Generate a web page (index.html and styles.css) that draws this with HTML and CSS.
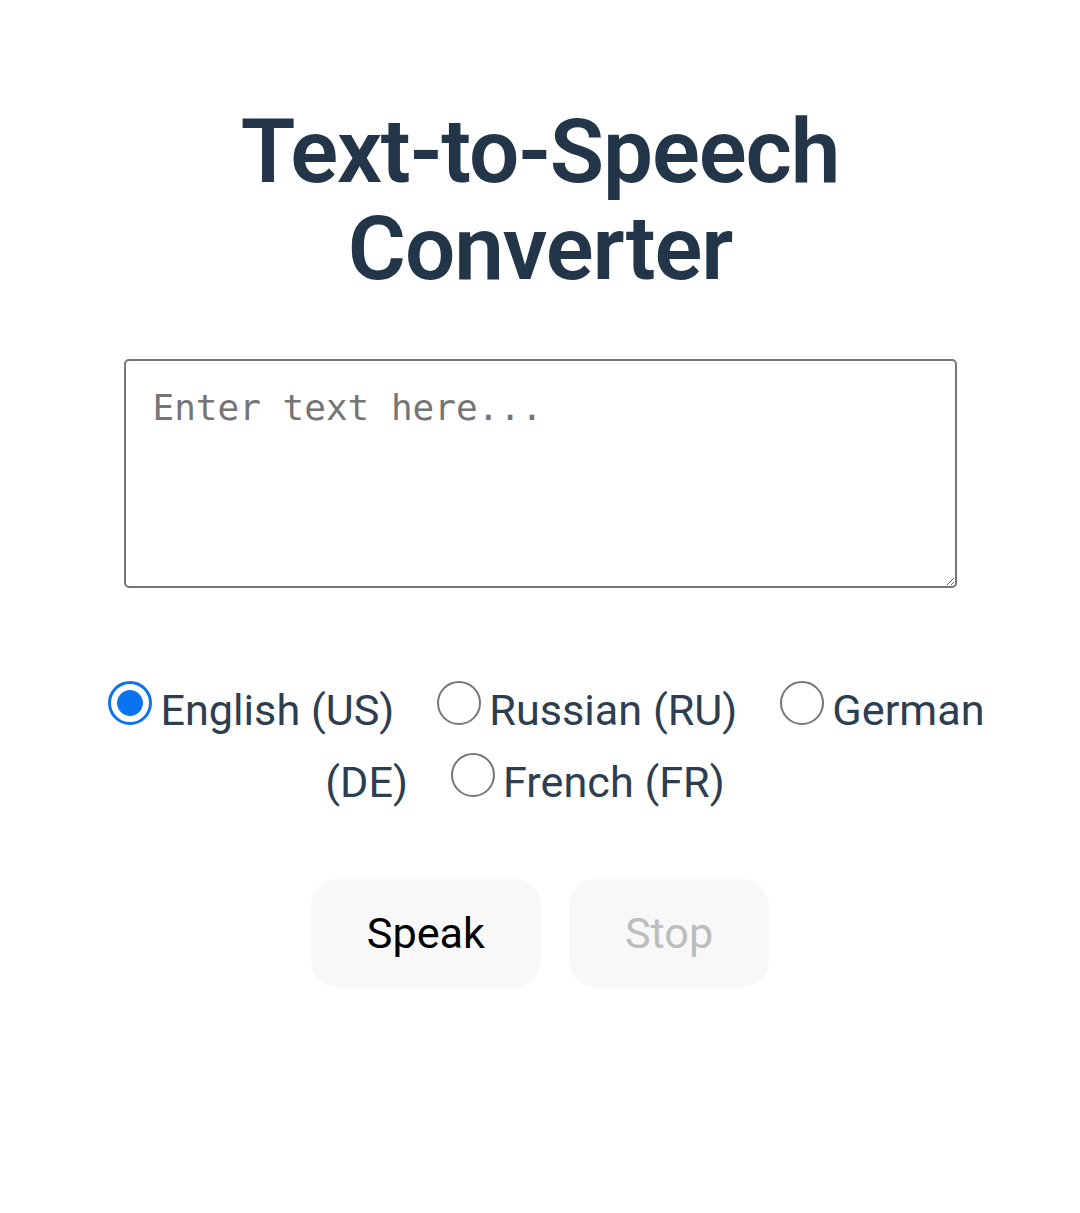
FILE: index.html
```html
<!DOCTYPE html>
<html lang="en">
<head>
<meta charset="utf-8">
<title>Text-to-Speech Converter</title>
<link rel="stylesheet" href="styles.css">
</head>
<body>
<main class="app">
  <h1 class="title">Text-to-Speech Converter</h1>
  <textarea class="input" placeholder="Enter text here..."></textarea>
  <div class="voices"><label class="voice"><input type="radio" name="lang" value="en-US" checked>English (US)</label><label class="voice"><input type="radio" name="lang" value="ru-RU">Russian (RU)</label><label class="voice"><input type="radio" name="lang" value="de-DE">German (DE)</label><label class="voice"><input type="radio" name="lang" value="fr-FR">French (FR)</label></div>
  <div class="actions">
    <button class="btn" type="button">Speak</button>
    <button class="btn" type="button" disabled>Stop</button>
  </div>
</main>
</body>
</html>
```
FILE: styles.css
```css
html, body {
  margin: 0;
  padding: 0;
  background: #ffffff;
}

body {
  font-family: Roboto, "Noto Sans", Arial, sans-serif;
  color: #2c3e50;
}

.app {
  display: flex;
  flex-direction: column;
  align-items: center;
  text-align: center;
}

.title {
  margin: 103px 0 0;
  width: 700px;
  font-size: 89px;
  line-height: 97px;
  letter-spacing: -1.1px;
  font-weight: 600;
  color: #233649;
}

.input {
  display: block;
  box-sizing: border-box;
  width: 833px;
  height: 229px;
  margin: 62px 0 0;
  padding: 26px 27px 18px;
  border: 2px solid #767676;
  border-radius: 5px;
  font-family: "DejaVu Sans Mono", "Liberation Mono", monospace;
  font-size: 36px;
  line-height: 42px;
  color: #222;
  background: #fff;
  resize: vertical;
}

.input::placeholder {
  color: #757575;
}

.voices {
  box-sizing: border-box;
  width: 940px;
  margin-top: 87px;
  font-size: 43.2px;
  line-height: 72px;
  color: #2c3e50;
  text-align: center;
}

.voice {
  margin-right: 30px;
}

.voice input {
  -webkit-appearance: none;
  appearance: none;
  display: inline-block;
  box-sizing: border-box;
  width: 44px;
  height: 44px;
  margin: 0 8px 0 13px;
  vertical-align: baseline;
  border: 2.5px solid #767676;
  border-radius: 50%;
  background: #fff;
}

.voice input:checked {
  border: 3.5px solid #0a74f0;
  background: radial-gradient(circle, #0a74f0 0, #0a74f0 12.5px, #ffffff 13.3px);
}

.actions {
  display: flex;
  gap: 28px;
  justify-content: center;
  margin-top: 60px;
}

.btn {
  height: 108px;
  padding: 0 56px;
  border: none;
  border-radius: 27px;
  background: #f8f8f8;
  font-family: Roboto, "Noto Sans", Arial, sans-serif;
  font-size: 43.2px;
  color: #000;
}

.btn:disabled {
  color: #bdbdbd;
}
```
